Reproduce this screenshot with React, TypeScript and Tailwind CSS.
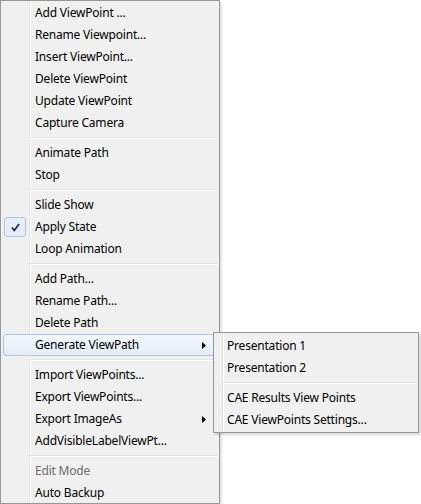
import React from "react";

type Item =
  | { kind: "item"; label: string; checked?: boolean; disabled?: boolean; sub?: boolean; active?: boolean }
  | { kind: "sep" };

const items: Item[] = [
  { kind: "item", label: "Add ViewPoint ..." },
  { kind: "item", label: "Rename Viewpoint..." },
  { kind: "item", label: "Insert ViewPoint..." },
  { kind: "item", label: "Delete ViewPoint" },
  { kind: "item", label: "Update ViewPoint" },
  { kind: "item", label: "Capture Camera" },
  { kind: "sep" },
  { kind: "item", label: "Animate Path" },
  { kind: "item", label: "Stop" },
  { kind: "sep" },
  { kind: "item", label: "Slide Show" },
  { kind: "item", label: "Apply State", checked: true },
  { kind: "item", label: "Loop Animation" },
  { kind: "sep" },
  { kind: "item", label: "Add Path..." },
  { kind: "item", label: "Rename Path..." },
  { kind: "item", label: "Delete Path" },
  { kind: "item", label: "Generate ViewPath", sub: true, active: true },
  { kind: "sep" },
  { kind: "item", label: "Import ViewPoints..." },
  { kind: "item", label: "Export ViewPoints..." },
  { kind: "item", label: "Export ImageAs", sub: true },
  { kind: "item", label: "AddVisibleLabelViewPt..." },
  { kind: "sep" },
  { kind: "item", label: "Edit Mode", disabled: true },
  { kind: "item", label: "Auto Backup" },
];

const subItems: Item[] = [
  { kind: "item", label: "Presentation 1" },
  { kind: "item", label: "Presentation 2" },
  { kind: "sep" },
  { kind: "item", label: "CAE Results View Points" },
  { kind: "item", label: "CAE ViewPoints Settings..." },
];

const Arrow = () => (
  <svg width="4" height="7" viewBox="0 0 4 7" className="ml-auto mr-[10px]">
    <path d="M0 0 L4 3.5 L0 7 Z" fill="#000" />
  </svg>
);

function Row({ it, textPad }: { it: Extract<Item, { kind: "item" }>; textPad: string }) {
  return (
    <div
      className={
        "relative h-[22px] flex items-center " +
        textPad +
        (it.active
          ? " rounded-[3px] border border-[#aec6e6] bg-[linear-gradient(to_bottom,#f4f8fd,#e3ecf7)]"
          : " border border-transparent")
      }
    >
      {it.checked && (
        <div className="absolute left-0 top-0 w-[22px] h-[20px] rounded-[3px] border border-[#aec3e0] bg-[#e6edf7] flex items-center justify-center">
          <svg width="9" height="9" viewBox="0 0 9 9">
            <path d="M1 4.5 L3.3 7.5 L8 1" stroke="#0d1b5e" strokeWidth="1.6" fill="none" />
          </svg>
        </div>
      )}
      <span className={it.disabled ? "text-[#6d6d6d]" : "text-black"}>{it.label}</span>
      {it.sub && <Arrow />}
    </div>
  );
}

export default function App() {
  return (
    <div
      className="relative w-[421px] h-[504px] bg-white text-[12px] leading-none tracking-[-0.2px]"
      style={{ fontFamily: '"Noto Sans", "Open Sans", sans-serif' }}
    >
      <div className="w-[220px] h-[504px] border border-[#979797] bg-[#f0f0f0] px-[2px] pt-[1px] bg-[linear-gradient(to_right,#f0f0f0_28px,#e2e3e3_28px,#e2e3e3_29px,#ffffff_29px,#ffffff_30px,#f0f0f0_30px)] shadow-[2px_2px_2px_rgba(0,0,0,0.12)]">
        {items.map((it, i) =>
          it.kind === "sep" ? (
            <div key={i} className="h-[8px] flex flex-col justify-center pl-[27px]">
              <div className="h-px bg-[#e2e3e3]" />
              <div className="h-px bg-white" />
            </div>
          ) : (
            <Row key={i} it={it} textPad="pl-[31px]" />
          )
        )}
      </div>
      <div className="absolute left-[213px] top-[332px] w-[206px] h-[101px] border border-[#979797] px-[2px] pt-[2px] bg-[linear-gradient(to_right,#f0f0f0_8px,#e2e3e3_8px,#e2e3e3_9px,#ffffff_9px,#ffffff_10px,#f0f0f0_10px)] shadow-[2px_2px_2px_rgba(0,0,0,0.15)]">
        {subItems.map((it, i) =>
          it.kind === "sep" ? (
            <div key={i} className="h-[8px] flex flex-col justify-center pl-[7px]">
              <div className="h-px bg-[#e2e3e3]" />
              <div className="h-px bg-white" />
            </div>
          ) : (
            <Row key={i} it={it} textPad="pl-[10px]" />
          )
        )}
      </div>
    </div>
  );
}
